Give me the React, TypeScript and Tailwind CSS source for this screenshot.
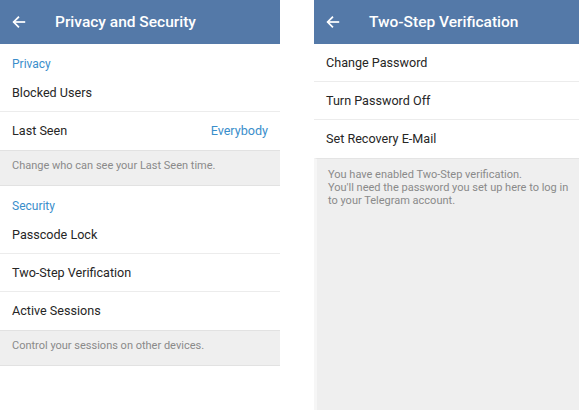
import React from "react";

const Back = () => (
  <svg width="16" height="16" viewBox="0 0 24 24" fill="none" stroke="white" strokeWidth="2.6" strokeLinecap="square">
    <path d="M20 12H5" />
    <path d="M11 5l-7 7 7 7" />
  </svg>
);

const Header = ({ title }: { title: string }) => (
  <div className="h-[44px] bg-[#5479a8] flex items-center text-white shrink-0">
    <div className="w-[55px] pl-[11px] flex items-center">
      <Back />
    </div>
    <span className="text-[15.5px] font-medium pt-[1px]">{title}</span>
  </div>
);

const Row = ({ label, value, last }: { label: string; value?: string; last?: boolean }) => (
  <div
    className={
      "h-[38px] flex items-center justify-between px-[12px] pt-[1px] text-[12.6px] text-[#262626] " +
      (last ? "" : "border-b border-[#ececec]")
    }
  >
    <span>{label}</span>
    {value && <span className="text-[#3a8ecb]">{value}</span>}
  </div>
);

const Section = ({ title }: { title: string }) => (
  <div className="h-[30px] flex items-end pb-[1px] px-[12px] text-[12px] text-[#3a8ecb]">{title}</div>
);

const Note = ({ text }: { text: string }) => (
  <div className="h-[36px] bg-[#efefef] border-t border-b border-[#e2e2e2] pt-[8px] px-[12px] text-[11px] leading-[13px] text-[#8a8a8a]">
    {text}
  </div>
);

export default function App() {
  return (
    <div className="w-[579px] h-[410px] bg-white flex overflow-hidden" style={{ fontFamily: "Roboto, 'Liberation Sans', sans-serif" }}>
      <div className="w-[280px] flex flex-col">
        <Header title="Privacy and Security" />
        <Section title="Privacy" />
        <Row label="Blocked Users" />
        <Row label="Last Seen" value="Everybody" last />
        <Note text="Change who can see your Last Seen time." />
        <Section title="Security" />
        <Row label="Passcode Lock" />
        <Row label="Two-Step Verification" />
        <Row label="Active Sessions" last />
        <Note text="Control your sessions on other devices." />
      </div>
      <div className="w-[34px]" />
      <div className="flex-1 flex flex-col">
        <Header title="Two-Step Verification" />
        <Row label="Change Password" />
        <Row label="Turn Password Off" />
        <Row label="Set Recovery E-Mail" last />
        <div className="flex-1 bg-[#efefef] border-t border-l-[3px] border-[#e4e4e4] border-l-[#f6f6f6] pl-[11px] pt-[9px] text-[11px] leading-[13px] text-[#8a8a8a]">
          <p>You have enabled Two-Step verification.</p>
          <p>You'll need the password you set up here to log in</p>
          <p>to your Telegram account.</p>
        </div>
      </div>
    </div>
  );
}
